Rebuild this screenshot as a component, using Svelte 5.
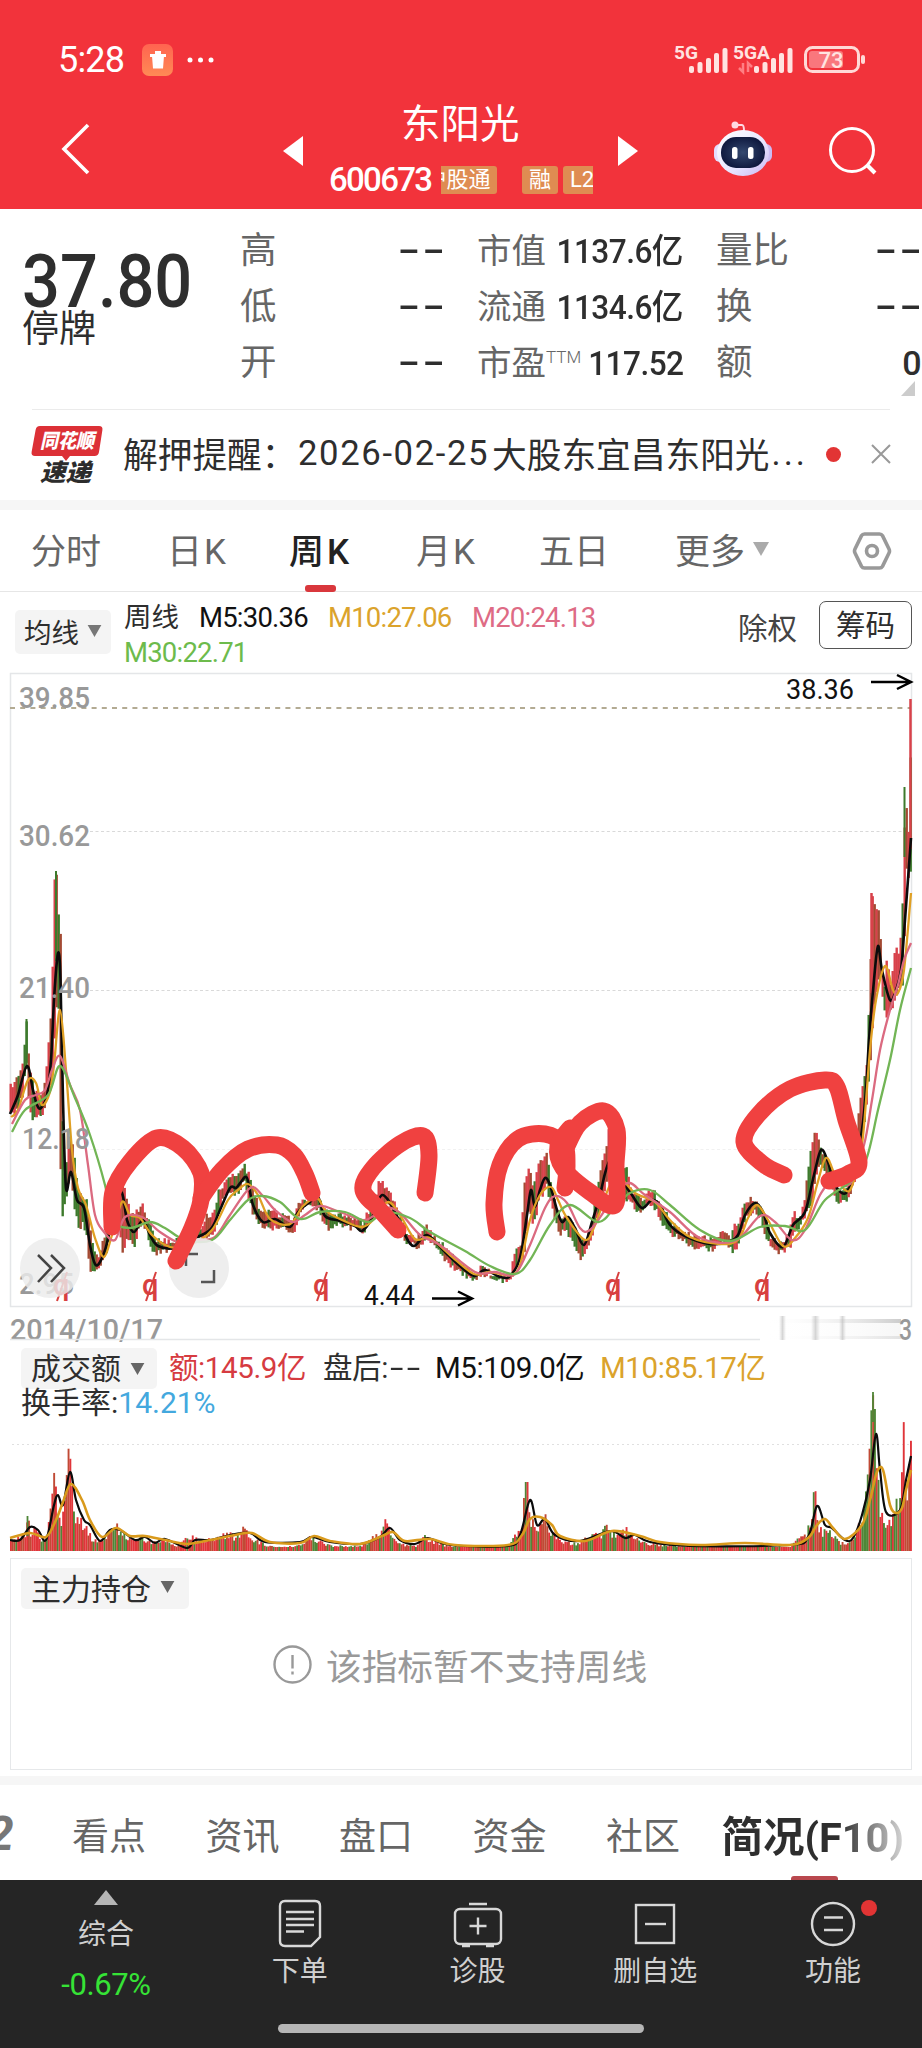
<script>
  const quotes = [
    ['高', '--', '市值', '1137.6亿', '量比', '--'],
    ['低', '--', '流通', '1134.6亿', '换', '--'],
    ['开', '--', '市盈', '117.52', '额', '0']
  ];
  const periods = [
    { label: '分时', left: 31 },
    { label: '日K', left: 167 },
    { label: '周K', left: 289, active: true },
    { label: '月K', left: 416 },
    { label: '五日', left: 539 },
    { label: '更多', left: 675, more: true }
  ];
  const sections = ['看点', '资讯', '盘口', '资金', '社区'];

  // x, high, low
  const range = [
    [10,1086,1115],[13,1083,1115],[18,1075,1105],[22,1060,1095],[24,1037,1070],[26,1019,1060],[28,1065,1112],[33,1088,1122],[37,1095,1115],[40,1096,1120],[44,1080,1108],[48,1040,1095],[51,990,1075],[53.5,878,1040],[56,871,1000],[58,926,1010],[60,936,1220],[62,1180,1215],[65,1170,1200],[68,1140,1185],[70,1137,1165],[72,1145,1200],[76,1180,1220],[78,1190,1230],[82,1200,1225],[86,1195,1240],[88,1220,1270],[92,1245,1272],[97,1255,1270],[102,1240,1262],[106,1225,1250],[112,1195,1220],[118,1180,1230],[122,1180,1256],[126,1200,1240],[130,1215,1240],[133,1215,1247],[138,1208,1228],[141,1201,1225],[145,1215,1230],[150,1225,1250],[155,1240,1255],[160,1240,1252],[172,1240,1250],[180,1238,1250],[190,1232,1245],[200,1227,1238],[205,1215,1240],[212,1213,1235],[218,1190,1215],[222,1185,1200],[228,1175,1195],[232,1177,1195],[238,1172,1192],[243,1165,1182],[248,1175,1200],[252,1190,1215],[257,1205,1225],[264,1212,1228],[270,1207,1230],[276,1213,1227],[285,1217,1228],[292,1220,1235],[297,1205,1220],[303,1197,1210],[310,1198,1205],[317,1195,1210],[321,1205,1222],[328,1215,1230],[335,1215,1225],[340,1212,1225],[347,1218,1228],[355,1217,1230],[362,1222,1235],[368,1210,1225],[374,1200,1214],[378,1178,1202],[383,1184,1205],[386,1187,1205],[392,1200,1215],[400,1220,1235],[405,1230,1242],[414,1238,1247],[420,1235,1248],[425,1222,1240],[432,1235,1245],[440,1243,1255],[450,1255,1268],[458,1262,1272],[464,1267,1276],[473,1275,1282],[480,1268,1275],[490,1272,1278],[500,1275,1281],[509,1276,1282],[512,1261,1275],[517,1245,1265],[520,1242,1260],[523,1185,1255],[526,1170,1225],[528,1165,1210],[532,1190,1225],[536,1170,1215],[539,1157,1190],[541,1160,1200],[545,1150,1185],[550,1185,1205],[555,1205,1225],[560,1220,1235],[565,1215,1230],[570,1220,1240],[575,1230,1248],[580,1240,1263],[585,1238,1252],[590,1225,1240],[594,1200,1225],[598,1180,1215],[602,1153,1200],[605,1150,1185],[608,1127,1170],[612,1130,1180],[616,1160,1195],[625,1167,1200],[630,1190,1202],[636,1195,1215],[642,1198,1210],[648,1190,1205],[651,1187,1205],[657,1200,1215],[663,1210,1228],[672,1225,1237],[680,1230,1238],[690,1235,1247],[697,1238,1250],[705,1238,1250],[713,1240,1252],[720,1234,1242],[724,1230,1242],[730,1237,1250],[733,1220,1253],[738,1225,1245],[742,1205,1225],[748,1200,1215],[755,1198,1212],[760,1207,1220],[764,1215,1240],[770,1238,1247],[778,1243,1253],[785,1238,1250],[790,1225,1248],[792,1210,1230],[798,1218,1230],[803,1205,1220],[808,1160,1210],[811,1147,1205],[814,1128,1180],[817,1137,1170],[821,1155,1165],[826,1160,1175],[832,1170,1190],[836,1190,1208],[840,1190,1200],[846,1185,1200],[850,1175,1195],[854,1150,1180],[858,1110,1150],[862,1080,1135],[866,1060,1100],[868,1000,1080],[869.5,960,1060],[871.5,893,1030],[873,907,1010],[877,906,985],[880,945,975],[882,980,1005],[884,985,1013],[886,952,1020],[889,985,1015],[892,970,1005],[895,942,1000],[898,953,990],[901,925,985],[903,842,980],[904.5,787,860],[907,840,880],[908.5,818,880],[910.5,699,870]
  ];
  const m5 = [[10,1114],[18,1095],[27,1066],[33,1090],[37,1105],[41,1108],[47,1095],[51,1060],[54,1000],[57,960],[59,954],[60.5,980],[63,1100],[66,1188],[71,1172],[77,1200],[84,1208],[90,1245],[95,1264],[100,1262],[107,1243],[115,1200],[122,1193],[127,1220],[134,1232],[143,1220],[150,1235],[158,1246],[175,1248],[190,1240],[210,1230],[220,1210],[230,1188],[236,1188],[241,1182],[247,1178],[253,1205],[263,1222],[275,1219],[290,1227],[298,1212],[310,1202],[318,1197],[325,1216],[340,1221],[355,1226],[362,1231],[372,1218],[382,1195],[395,1212],[405,1235],[414,1246],[427,1235],[445,1252],[460,1266],[474,1276],[485,1270],[500,1277],[510,1276],[520,1258],[527,1215],[531,1190],[535,1207],[540,1190],[545,1178],[550,1185],[557,1210],[562,1222],[568,1217],[575,1228],[584,1245],[592,1222],[600,1195],[606,1170],[612,1160],[622,1180],[632,1195],[642,1208],[652,1200],[660,1205],[670,1225],[685,1236],[710,1244],[728,1242],[738,1235],[745,1215],[755,1203],[763,1212],[770,1233],[783,1247],[793,1225],[805,1212],[814,1175],[821,1150],[828,1162],[835,1185],[846,1193],[855,1168],[862,1130],[866,1090],[869,1040],[874,980],[878,946],[882,970],[890,1000],[896,990],[901,970],[905,920],[911,838]];
  const m10 = [[11,1117],[18,1110],[28,1080],[36,1083],[42,1105],[50,1092],[54,1065],[60,1010],[66,1070],[72,1150],[78,1188],[86,1205],[95,1238],[104,1257],[112,1235],[122,1202],[130,1215],[140,1218],[152,1235],[170,1247],[190,1245],[212,1230],[228,1200],[238,1190],[248,1184],[258,1195],[270,1219],[290,1224],[303,1206],[317,1198],[325,1210],[340,1219],[362,1227],[375,1218],[388,1202],[400,1215],[415,1239],[430,1238],[450,1255],[474,1274],[490,1272],[510,1275],[520,1265],[530,1220],[540,1195],[551,1187],[558,1200],[567,1218],[585,1240],[595,1225],[610,1185],[620,1178],[635,1193],[655,1202],[670,1220],[690,1237],[720,1244],[738,1240],[748,1218],[757,1205],[768,1220],[783,1246],[795,1238],[808,1218],[817,1185],[826,1158],[835,1175],[845,1190],[852,1186],[862,1145],[870,1050],[876,1000],[885,966],[893,990],[898,993],[904,970],[911,893]];
  const m20 = [[12,1124],[25,1100],[36,1095],[45,1090],[52,1070],[60,1056],[70,1085],[80,1110],[88,1165],[95,1215],[104,1232],[115,1240],[125,1217],[142,1217],[160,1232],[180,1243],[200,1240],[215,1237],[230,1215],[250,1188],[262,1195],[275,1210],[292,1222],[305,1215],[320,1206],[340,1212],[365,1220],[385,1208],[400,1213],[420,1235],[440,1245],[475,1272],[495,1272],[515,1274],[530,1245],[545,1208],[555,1196],[567,1203],[580,1228],[590,1230],[605,1210],[618,1190],[630,1183],[645,1195],[670,1212],[700,1238],[735,1241],[760,1216],[775,1222],[792,1240],[805,1230],[820,1195],[832,1182],[850,1184],[864,1145],[872,1100],[880,1050],[890,1010],[898,985],[904,960],[911,943]];
  const m30 = [[12,1132],[25,1110],[48,1095],[60,1066],[75,1098],[90,1135],[105,1185],[112,1220],[130,1228],[150,1222],[165,1228],[185,1240],[212,1240],[230,1220],[248,1200],[262,1196],[280,1202],[300,1219],[320,1212],[345,1212],[368,1222],[385,1212],[410,1218],[430,1232],[465,1251],[490,1266],[515,1274],[530,1260],[550,1225],[570,1205],[598,1222],[615,1207],[630,1193],[650,1190],[670,1205],[700,1230],[730,1241],[760,1227],[785,1226],[805,1230],[825,1200],[850,1182],[866,1160],[878,1110],[890,1060],[900,1010],[911,968]];

  const volume = [[10,1538],[18,1535],[25,1532],[27,1516],[30,1530],[35,1525],[40,1540],[45,1540],[50,1505],[53,1471],[56,1500],[60,1520],[63,1487],[67,1446],[69,1455],[72,1500],[78,1515],[84,1525],[90,1535],[97,1542],[104,1535],[110,1522],[116,1525],[125,1535],[140,1535],[150,1542],[165,1538],[175,1546],[190,1534],[200,1541],[215,1537],[225,1532],[235,1535],[243,1527],[252,1537],[265,1545],[280,1547],[300,1545],[307,1536],[315,1538],[330,1545],[345,1546],[360,1545],[370,1538],[378,1530],[382,1528],[385,1517],[390,1532],[400,1543],[415,1546],[422,1534],[430,1538],[440,1544],[460,1547],[500,1548],[508,1545],[515,1530],[521,1530],[524,1482],[527,1482],[530,1515],[535,1530],[545,1515],[550,1530],[560,1540],[575,1543],[590,1535],[600,1532],[607,1522],[612,1532],[625,1528],[635,1538],[650,1543],[700,1547],[760,1546],[790,1547],[797,1538],[806,1533],[811,1505],[814,1484],[817,1520],[822,1530],[830,1530],[840,1542],[850,1540],[857,1522],[864,1505],[868,1460],[871,1400],[873,1392],[877,1460],[880,1510],[884,1525],[890,1515],[895,1492],[899,1500],[903,1418],[906,1500],[911,1426]];
  const v5 = [[10,1540],[20,1540],[30,1527],[38,1530],[46,1540],[54,1505],[58,1495],[63,1505],[70,1472],[76,1500],[84,1520],[90,1525],[100,1541],[110,1530],[120,1530],[135,1540],[145,1537],[155,1543],[165,1539],[187,1548],[195,1540],[210,1540],[230,1535],[250,1533],[265,1542],[300,1542],[312,1537],[330,1542],[360,1544],[380,1537],[390,1528],[400,1540],[415,1544],[428,1538],[450,1545],[508,1546],[520,1535],[530,1500],[537,1525],[545,1519],[555,1535],[580,1541],[610,1531],[625,1538],[635,1535],[650,1542],[690,1546],[790,1545],[808,1537],[817,1506],[825,1525],[832,1528],[845,1540],[853,1538],[862,1515],[870,1480],[876,1434],[880,1470],[886,1512],[900,1510],[906,1480],[911,1456]];
  const v10 = [[10,1538],[30,1533],[46,1537],[56,1520],[63,1502],[71,1484],[82,1500],[90,1520],[102,1537],[116,1528],[130,1536],[145,1536],[165,1540],[187,1544],[210,1540],[235,1535],[252,1533],[270,1542],[300,1543],[314,1536],[330,1541],[360,1544],[382,1536],[393,1532],[405,1541],[430,1539],[455,1545],[508,1545],[522,1535],[530,1519],[540,1517],[552,1525],[560,1536],[585,1541],[612,1531],[640,1536],[660,1542],[700,1545],[745,1543],[790,1545],[808,1538],[817,1525],[825,1519],[833,1528],[845,1539],[862,1525],[870,1500],[877,1472],[883,1470],[890,1505],[896,1513],[902,1508],[906,1490],[911,1470]];

  const scribbles = [
    [[112,1227],[113,1192],[130,1162],[157,1138],[183,1148],[201,1173],[201,1200],[192,1228],[176,1261]],
    [[201,1198],[222,1170],[248,1149],[277,1145],[294,1155],[305,1174],[312,1193]],
    [[425,1193],[429,1155],[423,1136],[400,1144],[373,1168],[363,1190],[380,1210],[398,1230]],
    [[497,1232],[494,1203],[500,1165],[518,1139],[545,1134],[564,1145],[567,1165],[565,1188]],
    [[565,1150],[580,1123],[604,1111],[617,1130],[616,1165],[615,1205],[590,1192],[563,1168],[558,1146],[570,1128]],
    [[784,1175],[763,1164],[744,1142],[758,1115],[790,1089],[825,1080],[837,1087],[846,1120],[859,1162],[848,1174],[829,1181]]
  ];

  const rand = (i) => {
    const v = Math.sin(i * 127.1 + 11.7) * 43758.5453;
    return v - Math.floor(v);
  };

  function at(points, x, k = 1) {
    let i = 1;
    while (i < points.length - 1 && points[i][0] < x) i++;
    const a = points[i - 1];
    const b = points[i];
    const t = Math.min(1, Math.max(0, (x - a[0]) / (b[0] - a[0])));
    return a[k] + (b[k] - a[k]) * t;
  }

  // Catmull-Rom through the points
  function smooth(p, tension = 6) {
    let d = `M${p[0][0]} ${p[0][1]}`;
    for (let i = 0; i < p.length - 1; i++) {
      const a = p[i - 1] ?? p[i];
      const b = p[i];
      const c = p[i + 1];
      const e = p[i + 2] ?? c;
      const c1 = [b[0] + (c[0] - a[0]) / tension, b[1] + (c[1] - a[1]) / tension];
      const c2 = [c[0] - (e[0] - b[0]) / tension, c[1] - (e[1] - b[1]) / tension];
      d += `C${c1[0].toFixed(1)} ${c1[1].toFixed(1)} ${c2[0].toFixed(1)} ${c2[1].toFixed(1)} ${c[0]} ${c[1]}`;
    }
    return d;
  }

  const red = '#d8414a';
  const green = '#3d7a2c';
  const mixed = '#a34a33';

  const candles = [];
  for (let x = 9.5, i = 0; x < 911; x += 2, i++) {
    const falling = at(m5, x + 3) > at(m5, x - 3);
    const r = rand(i);
    const color = r < 0.32 ? mixed : (r < 0.78) === falling ? green : red;
    const jitter = rand(i + 900) * 7;
    candles.push({ x, top: at(range, x, 1) + jitter - 3, bottom: at(range, x, 2) - rand(i + 400) * 6 + 2, color });
  }

  const bars = [];
  for (let x = 10, i = 0; x < 911; x += 1.8, i++) {
    const peak = at(volume, x);
    const h = (1551 - peak) * (0.62 + rand(i + 70) * 0.45);
    const sharp = [27, 53, 67, 385, 524, 526, 814, 873, 903, 910].some((s) => Math.abs(s - x) < 1.2);
    const r = rand(i + 31);
    bars.push({ x, h: Math.max(4, sharp ? 1551 - peak : h), color: r < 0.45 ? '#e0353a' : r < 0.72 ? '#c04a35' : '#4f8637' });
  }
</script>

{#snippet caret(w, h, fill)}
  <svg class="caret" width={w} height={h} viewBox="0 0 16 14"><path d="M0 0h16L8 14z" {fill} /></svg>
{/snippet}

<div class="app">
  <header>
    <div class="status">
      <span class="time">5:28</span>
      <span class="trash">
        <svg width="20" height="20" viewBox="0 0 20 20"><path d="M2 4h16v3H2zM7 1h6v3H7zM4 6h12l-1 12.500H5z" fill="#fff" /></svg>
      </span>
      <svg class="dots" width="28" height="8" viewBox="0 0 28 8" fill="#fff"><circle cx="3" cy="4" r="2.500" /><circle cx="13.500" cy="4" r="2.500" /><circle cx="24" cy="4" r="2.500" /></svg>
      <svg class="signals" width="195" height="44" viewBox="672 37 195 44">
        <g class="net"><text x="674" y="58" textLength="24" lengthAdjust="spacingAndGlyphs">5G</text><text x="733" y="58" textLength="37" lengthAdjust="spacingAndGlyphs">5GA</text></g>
        <g fill="#ffe3e0">
          {#each [689, 754] as x0}
            <rect x={x0} y="65" width="5" height="7" rx="2" />
            <rect x={x0 + 8.500} y="61" width="5" height="11" rx="2" />
            <rect x={x0 + 17} y="57" width="5" height="15" rx="2" />
            <rect x={x0 + 25} y="52" width="5" height="20" rx="2" />
            <rect x={x0 + 33.500} y="47" width="5" height="25" rx="2" />
          {/each}
        </g>
        <path d="M743 62v9l-4-4M748 71v-9l4 4" fill="none" stroke="#ff7f84" stroke-width="2.500" />
        <rect x="809" y="50" width="34" height="17" rx="3" fill="#f9777d" />
        <rect x="805.500" y="46.500" width="53" height="24" rx="7" fill="none" stroke="#ffd9d6" stroke-width="3" />
        <rect x="861" y="54" width="4" height="9" rx="2" fill="#ffd9d6" />
        <text class="pct" x="831" y="67" text-anchor="middle">73</text>
      </svg>
    </div>

    <div class="nav">
      <svg class="back" width="30" height="52" viewBox="0 0 30 52"><path d="M27 2 3 26l24 24" fill="none" stroke="#fff" stroke-width="3.600" /></svg>
      <svg class="prev" width="20" height="30" viewBox="0 0 20 30"><path d="M20 0v30L0 15z" fill="#fff" /></svg>
      <div class="stock">
        <h1>东阳光</h1>
        <div class="code">
          <span>600673</span>
          <div class="tags"><i class="first">沪股通</i><i class="rong">融</i><i class="lv">L2</i></div>
        </div>
      </div>
      <svg class="next" width="20" height="30" viewBox="0 0 20 30"><path d="M0 0v30l20-15z" fill="#fff" /></svg>
      <svg class="robot" width="60" height="58" viewBox="0 0 60 58">
        <defs>
          <linearGradient id="shell" x1="0" y1="0" x2="1" y2="1"><stop offset="0" stop-color="#fff" /><stop offset=".6" stop-color="#e6e4ff" /><stop offset="1" stop-color="#c9b4f0" /></linearGradient>
          <radialGradient id="visor"><stop offset="0" stop-color="#34486f" /><stop offset="1" stop-color="#101a40" /></radialGradient>
        </defs>
        <circle cx="22" cy="5" r="3.500" fill="#ffd9e2" />
        <path d="M24 5h5q2 0 2 6" fill="none" stroke="#ffd9e2" stroke-width="2" />
        <rect x="1" y="24" width="12" height="18" rx="6" fill="#e4ddff" />
        <rect x="47" y="24" width="12" height="18" rx="6" fill="#cbbcf3" />
        <ellipse cx="30" cy="33" rx="26" ry="23" fill="url(#shell)" />
        <rect x="8" y="17" width="44" height="31" rx="15" fill="url(#visor)" />
        <rect x="19" y="27" width="5.500" height="12" rx="2.500" fill="#fff" />
        <rect x="35" y="27" width="5.500" height="12" rx="2.500" fill="#fff" />
      </svg>
      <svg class="search" width="50" height="50" viewBox="0 0 50 50" fill="none" stroke="#fff" stroke-width="3"><circle cx="24" cy="24" r="21.500" /><path d="m39 39 8 8" stroke-width="4" /></svg>
    </div>
  </header>

  <section class="summary">
    <div class="last"><strong>37.80</strong><span>停牌</span></div>
    <div class="quotes">
      {#each quotes as [a, av, b, bv, c, cv], i}
        <div class="cell one"><span>{a}</span><b class="dash">{av}</b></div>
        <div class="cell two"><span>{b}{#if i === 2}<sup>TTM</sup>{/if}</span><b>{bv}</b></div>
        <div class="cell three"><span>{c}</span><b class:dash={cv === '--'}>{cv}</b></div>
      {/each}
      <svg class="corner" width="14" height="15" viewBox="0 0 14 15"><path d="M14 0v15H0z" fill="#ccc" /></svg>
    </div>
  </section>

  <section class="news">
    <svg class="badge" width="74" height="62" viewBox="30 423 74 62">
      <path d="M40 425h59q4 0 3.400 4l-3.400 22q-.600 4-4.600 4H70l-4 5-4-5H35q-4 0-3.400-4l4-22q.600-4 4.400-4z" fill="#dc3036" />
      <text x="40" y="447" textLength="54" lengthAdjust="spacingAndGlyphs" fill="#fff">同花顺</text>
      <text class="dark" x="40" y="480" textLength="51" lengthAdjust="spacingAndGlyphs" fill="#2c2c2c">速递</text>
    </svg>
    <p><span>解押提醒：</span><span class="date">2026-02-25</span>大股东宜昌东阳光<em>...</em></p>
    <i class="unread"></i>
    <svg class="close" width="20" height="20" viewBox="0 0 20 20"><path d="m1 1 18 18M19 1 1 19" stroke="#999" stroke-width="2" /></svg>
  </section>

  <nav class="periods">
    {#each periods as p, i}
      <span class:active={p.active} class:latin={p.label.endsWith('K')} style:width="{(periods[i + 1]?.left ?? 852) - p.left}px">{p.label}{#if p.more}{@render caret(18, 14, '#aaa')}{/if}</span>
    {/each}
    <svg width="40" height="38" viewBox="0 0 40 38" fill="none" stroke="#999" stroke-width="3.600"><path d="M12.500 2h15q2 0 3 1.700L37 17q1 2 0 4l-6.500 13.300q-1 1.700-3 1.700h-15q-2 0-3-1.700L3 21q-1-2 0-4L9.500 3.700q1-1.700 3-1.700z" /><circle cx="20" cy="19" r="5.500" /></svg>
  </nav>

  <section class="indicator">
    <button>均线{@render caret(15, 12, '#777')}</button>
    <div class="averages">
      <span>周线</span><span class="k">M5:30.36</span><span class="y">M10:27.06</span><span class="p">M20:24.13</span><span class="g">M30:22.71</span>
    </div>
    <span class="adjust">除权</span>
    <span class="chips">筹码</span>
  </section>

  <svg class="chart" width="922" height="672" viewBox="0 672 922 672">
    <rect x="10.500" y="673.500" width="901" height="633" fill="none" stroke="#e4e6e8" stroke-width="1.500" />
    <path d="M10 708H911" stroke="#b3ab93" stroke-width="1.800" stroke-dasharray="5 5.200" />
    <path d="M90 831.500H911M90 990.500H870" stroke="#d9d9d9" stroke-dasharray="3 2.500" />
    <path d="M90 1149.500H870" stroke="#f1f1f1" stroke-dasharray="3 2.500" />

    {#each candles as c}
      <rect x={c.x} y={c.top} width="2.400" height={Math.max(3, c.bottom - c.top)} fill={c.color} />
    {/each}
    <path d="M26.500 1019v50M56 871v90M904.500 787v70" stroke="#3d7a2c" stroke-width="2" />
    <path d="M910.500 699v150M871.500 893v100" stroke="#d8414a" stroke-width="2.500" />

    <g fill="none" stroke-width="2.300" stroke-linejoin="round">
      <path d={smooth(m5)} stroke="#0b0b0b" stroke-width="2.600" />
      <path d={smooth(m10)} stroke="#e0a024" />
      <path d={smooth(m20)} stroke="#db6a80" />
      <path d={smooth(m30)} stroke="#72b555" />
    </g>

    <g class="axis">
      <text x="19" y="708" textLength="71" lengthAdjust="spacingAndGlyphs">39.85</text>
      <text x="19" y="846" textLength="71" lengthAdjust="spacingAndGlyphs">30.62</text>
      <text x="19" y="998" textLength="71" lengthAdjust="spacingAndGlyphs">21.40</text>
      <text x="22" y="1149" textLength="68" lengthAdjust="spacingAndGlyphs">12.18</text>
      <text x="19" y="1294" textLength="55" lengthAdjust="spacingAndGlyphs">2.95</text>
      <text x="10" y="1340" textLength="153" lengthAdjust="spacingAndGlyphs">2014/10/17</text>
      <text x="899" y="1340" textLength="13" lengthAdjust="spacingAndGlyphs">3</text>
    </g>

    <g class="mark">
      {#each [61, 150, 321, 613, 762] as x}
        <text x={x - 8} y="1295">q</text>
        <path d="M{x - 4} 1301 {x + 6} 1272" />
      {/each}
    </g>

    <g fill="#ececec">
      <circle cx="50" cy="1268" r="30" opacity=".82" />
      <circle cx="199" cy="1268" r="30" opacity=".9" />
    </g>
    <path d="m38 1255 13 13-13 14M51 1255l13 13-13 14" fill="none" stroke="#444" stroke-width="2.500" />
    <path d="M186 1266v-12h12M214 1270v12h-13" fill="none" stroke="#555" stroke-width="2.500" />

    <g fill="none" stroke="#f04140" stroke-width="17" stroke-linecap="round" stroke-linejoin="round">
      {#each scribbles as s}
        <path d={smooth(s)} />
      {/each}
    </g>

    <g class="extreme">
      <text x="786" y="699" textLength="68" lengthAdjust="spacingAndGlyphs">38.36</text>
      <text x="364" y="1305" textLength="51" lengthAdjust="spacingAndGlyphs">4.44</text>
      <path d="M871 682h40M897 675l14 7-14 7M432 1298.500h40M458 1291.500l14 7-14 7" />
    </g>

    <path d="M10 1339.500H760" stroke="#e4e6e8" stroke-width="1.500" />
    <linearGradient id="ghost"><stop offset="0" stop-color="#fff" stop-opacity="0" /><stop offset="1" stop-color="#aaa" /></linearGradient>
    <linearGradient id="soft"><stop offset="0" stop-color="#bbb" stop-opacity="0" /><stop offset=".5" stop-color="#bbb" /><stop offset="1" stop-color="#bbb" stop-opacity="0" /></linearGradient>
    <rect x="765" y="1319" width="136" height="4" fill="url(#ghost)" opacity=".6" />
    <rect x="765" y="1323" width="136" height="13" fill="url(#ghost)" opacity=".1" />
    <rect x="765" y="1336" width="136" height="3" fill="url(#ghost)" opacity=".35" />
    <g fill="url(#soft)" opacity=".6"><rect x="779" y="1316" width="7" height="24" /><rect x="811" y="1316" width="9" height="24" /><rect x="839" y="1316" width="7" height="24" /></g>
  </svg>

  <section class="turnover">
    <div class="legend">
      <button>成交额{@render caret(15, 12, '#666')}</button>
      <span class="r">额:145.9亿</span><span class="after">盘后:<tt>--</tt></span><span class="k v5">M5:109.0亿</span><span class="y v10">M10:85.17亿</span>
    </div>
    <div class="rate">换手率:<span>14.21%</span></div>
    <svg width="922" height="138" viewBox="0 1416 922 138">
      <path d="M12 1444.500H911" stroke="#e0e0e0" stroke-dasharray="2 3" />
      {#each bars as b}
        <rect x={b.x} y={1551 - b.h} width="1.900" height={b.h} fill={b.color} />
      {/each}
      <path d="M873 1392v30M27.500 1516v20" stroke="#4f8637" stroke-width="1.800" />
      <g fill="none" stroke-width="2.200">
        <path d={smooth(v5)} stroke="#0b0b0b" />
        <path d={smooth(v10)} stroke="#d99a1c" stroke-width="2.600" />
      </g>
    </svg>
  </section>

  <section class="holding">
    <button>主力持仓{@render caret(15, 12, '#666')}</button>
    <p>
      <svg width="39" height="39" viewBox="0 0 39 39" fill="none" stroke="#999" stroke-width="2.400"><circle cx="19.500" cy="19.500" r="18" /><path d="M19.500 10v13.500M19.500 26.500v3" /></svg>
      该指标暂不支持周线
    </p>
  </section>

  <nav class="sections">
    <span class="cut">2</span>
    {#each sections as s}<span>{s}</span>{/each}
    <span class="current">简况(F10)</span>
  </nav>

  <footer>
    <div class="item index">
      <svg width="24" height="15" viewBox="0 0 24 15"><path d="M12 0l12 15H0z" fill="#b5b5b5" /></svg>
      <span>综合</span>
      <em>-0.67%</em>
    </div>
    <div class="item">
      <svg width="44" height="49" viewBox="0 0 44 49" fill="none" stroke="#d8d8d8" stroke-width="2.400"><path d="M7 2h30q5 0 5 5v31l-9 9H7q-5 0-5-5V7q0-5 5-5z" /><path d="M8 13h28M8 20h28M8 26h28M8 32.500h18" /></svg>
      <span>下单</span>
    </div>
    <div class="item">
      <svg width="50" height="49" viewBox="0 0 50 49" fill="none" stroke="#d8d8d8" stroke-width="2.400"><rect x="2" y="10" width="46" height="35" rx="5" /><path d="M16 5h18M25 18.500v17M16.500 27h17M9 47h8M33 47h8" /></svg>
      <span>诊股</span>
    </div>
    <div class="item">
      <svg width="50" height="49" viewBox="0 0 50 49" fill="none" stroke="#d8d8d8" stroke-width="2.400"><rect x="6" y="6" width="38" height="38" /><path d="M15 25h21" /></svg>
      <span>删自选</span>
    </div>
    <div class="item">
      <svg width="50" height="49" viewBox="0 0 50 49" fill="none" stroke="#d8d8d8" stroke-width="2.400"><circle cx="25" cy="25" r="21" /><path d="M16 18.500h19M16 31h19" /></svg>
      <span>功能</span>
      <i class="alert"></i>
    </div>
    <i class="home"></i>
  </footer>
</div>

<style>
  :global(body) { margin: 0; background: #fff; }
  .app { width: 922px; height: 2048px; overflow: hidden; background: #fff; color: #2e2e2e; font-family: Roboto, 'Noto Sans CJK SC', sans-serif; white-space: nowrap; }
  .app * { box-sizing: border-box; }
  svg { display: block; flex: none; }
  h1, p { margin: 0; font-weight: 400; }
  i, em { font-style: normal; }
  button { display: flex; align-items: center; border: 0; border-radius: 5px; background: #f4f4f4; color: #2e2e2e; font: inherit; padding: 0; }

  header { height: 209px; background: #f2333b; color: #fff; }
  .status { height: 88px; padding: 32px 55px 0 58px; display: flex; align-items: center; }
  .time { width: 84px; font-size: 36px; letter-spacing: -0.8px; line-height: 56px; }
  .trash { width: 31px; height: 32px; border-radius: 7px; background: linear-gradient(#ff6450, #ff8a55); display: grid; place-items: center; }
  .dots { margin-left: 14px; }
  .signals { margin-left: auto; overflow: visible; }
  .net { font-size: 19px; font-weight: 700; fill: #ffe3e0; }
  .pct { font-size: 22px; fill: #ffe3e0; font-weight: 500; }

  .nav { height: 121px; display: flex; align-items: flex-start; padding-left: 61px; }
  .back { margin-top: 35px; }
  .prev { margin: 48px 0 0 192px; }
  .stock { width: 315px; padding-left: 24px; }
  h1 { font-size: 39.500px; line-height: 56px; margin: 9px 0 0 74px; }
  .code { display: flex; align-items: center; height: 38px; margin-top: 8px; }
  .code > span { width: 114px; font-size: 33px; font-weight: 500; letter-spacing: -1.700px; padding-left: 2px; line-height: 38px; }
  .tags { width: 152px; height: 28px; overflow: hidden; display: flex; }
  .tags i { flex: none; height: 28px; border-radius: 3px; background: #df8c52; font-size: 22px; line-height: 27px; text-align: center; }
  .tags .first { width: 80px; margin-left: -24px; padding-left: 1px; margin-right: 25px; }
  .tags .rong { width: 36px; margin-right: 5px; }
  .tags .lv { width: 38px; }
  .next { margin-top: 48px; }
  .robot { margin: 32px 0 0 75px; }
  .search { margin: 38px 0 0 55px; }

  .summary { height: 200px; display: flex; padding-top: 14px; }
  .last { width: 240px; padding: 26px 0 0 22px; }
  .last strong { display: block; font-size: 75px; font-weight: 500; line-height: 64px; transform: scaleX(.89); transform-origin: 0 0; }
  .last span { display: block; font-size: 37px; line-height: 40px; margin-top: -3px; }
  .quotes { position: relative; height: 184px; display: grid; grid-template-columns: 204px 206px 205px; column-gap: 33px; grid-auto-rows: 56px; }
  .cell { display: flex; justify-content: space-between; align-items: center; font-size: 36.500px; color: #666; line-height: 56px; }
  .cell b { font-weight: 500; font-size: 34px; letter-spacing: -0.6px; color: #2e2e2e; }
  .two { font-size: 34.500px; }
  .two b { transform: scaleX(.93); transform-origin: 100% 50%; }
  .cell .dash { transform: scaleX(1.8); transform-origin: 100% 50%; letter-spacing: 1.500px; margin-right: -3px; font-size: 36px; }
  sup { font-size: 17px; line-height: 0; vertical-align: 12px; font-weight: 300; }
  .corner { position: absolute; right: 6px; bottom: 11px; }

  .news { height: 91px; margin: 0 32px; border-top: 1px solid #ebebeb; display: flex; align-items: center; }
  .badge { margin-left: -2px; }
  .badge text { font-size: 20px; font-weight: 900; font-style: italic; font-family: 'Noto Sans CJK SC', sans-serif; }
  .badge .dark { font-size: 24px; }
  .news p { width: 704px; margin: -4px 0 0 19px; font-size: 34.700px; display: flex; align-items: center; height: 54px; }
  .news p > span:first-child { width: 175px; }
  .date { width: 194px; letter-spacing: 1.600px; }
  .news em { letter-spacing: 3px; margin-left: 2px; }
  .unread { width: 15px; height: 15px; border-radius: 50%; background: #e23434; margin-left: -1px; margin-top: -1px; }
  .close { margin: -2px 0 0 auto; transform: translateX(1px); }

  .periods { height: 92px; border-top: 10px solid #f6f6f6; border-bottom: 1px solid #e6e6e6; padding: 0 30px 0 31px; display: flex; align-items: center; font-size: 35px; color: #666; }
  .periods span { position: relative; flex: none; display: flex; align-items: center; height: 100%; padding-bottom: 4px; }
  .periods .latin { letter-spacing: 2px; }
  .periods .active { color: #222; font-weight: 500; letter-spacing: 3px; }
  .periods .active::after { content: ''; position: absolute; left: 16px; bottom: -1px; width: 31px; height: 7px; border-radius: 3px; background: #d9373c; }
  .periods .caret { margin-left: 7px; }

  .indicator { height: 80px; display: flex; padding-left: 15px; }
  .indicator button { width: 96px; height: 44px; margin-top: 18px; padding: 0 0 2px 9px; font-size: 27.500px; }
  .indicator .caret { margin-left: 8px; }
  .averages { width: 598px; margin-left: 13px; padding-top: 8px; display: flex; flex-wrap: wrap; align-content: flex-start; font-size: 27.500px; line-height: 35px; letter-spacing: -0.8px; }
  .averages span:nth-child(1) { width: 75px; letter-spacing: 0; }
  .averages .k { width: 129px; }
  .averages .y { width: 144px; }
  .averages .p { width: 200px; }
  .k { color: #111; }
  .y { color: #dba32c; }
  .p { color: #de6b85; }
  .g { color: #6dbb4c; }
  .r { color: #d63b41; }
  .adjust { width: 81px; margin-left: 16px; font-size: 29.500px; line-height: 75px; color: #444; }
  .chips { width: 93px; height: 48px; margin-top: 9px; border: 1.500px solid #555; border-radius: 7px; text-align: center; font-size: 29.500px; line-height: 48px; }

  .axis { font-size: 29px; fill: #999; font-weight: 500; }
  .extreme { font-size: 27px; fill: #111; }
  .extreme path { fill: none; stroke: #000; stroke-width: 2.500; }
  .mark { font-size: 29px; fill: #d8403f; font-weight: 500; }
  .mark path { stroke: #d8403f; stroke-width: 2; }

  .turnover { height: 214px; }
  .turnover > svg { overflow: visible; }
  .legend { height: 44px; padding-left: 21px; display: flex; align-items: flex-start; font-size: 29.500px; line-height: 49px; letter-spacing: -0.4px; }
  .legend button { width: 136px; height: 41px; margin: 4px 12px 0 0; padding-left: 10px; font-size: 30px; line-height: 40px; }
  .legend .caret, .holding .caret { margin-left: 9px; }
  .legend .r { width: 154px; }
  .after { width: 112px; }
  tt { display: inline-block; font-family: inherit; transform: scaleX(1.650); transform-origin: 0 50%; letter-spacing: 2px; margin-left: 2px; }
  .v5 { width: 165px; }
  .rate { padding-left: 21px; height: 28px; font-size: 30px; line-height: 29px; }
  .rate span { color: #43a8de; letter-spacing: 0; }

  .holding { height: 212px; margin: 0 10px; border: 1.500px solid #e6e8ea; padding: 9px 0 0 10px; }
  .holding button { width: 168px; height: 41px; padding: 0 0 3px 10px; font-size: 30px; }
  .holding p { display: flex; align-items: center; gap: 14px; height: 54px; margin: 28px 0 0 252px; color: #999; font-size: 35.700px; }

  .sections { height: 104px; margin-top: 6px; border-top: 9px solid #f6f6f6; position: relative; display: flex; align-items: center; font-size: 37px; color: #666; overflow: hidden; padding-top: 2px; }
  .sections span { flex: none; width: 133.500px; }
  .sections .cut { width: 72px; font-size: 48px; font-weight: 700; font-style: italic; text-indent: -13px; color: #777; }
  .sections .current { width: 196px; margin-left: -18px; font-size: 41.500px; font-weight: 700; background: linear-gradient(90deg, #2e2e2e 60%, #ddd 94%); -webkit-background-clip: text; background-clip: text; color: transparent; }
  .sections::after { content: ''; position: absolute; left: 791px; bottom: 0; width: 47px; height: 4px; border-radius: 3px 3px 0 0; background: #b9484e; }

  footer { position: relative; height: 168px; background: #252525; color: #d0d0d0; display: flex; font-size: 28px; padding-left: 17px; }
  .item { position: relative; flex: none; width: 177.700px; display: flex; flex-direction: column; align-items: center; padding-top: 19px; }
  .item:first-child { width: 194px; padding: 10px 16px 0 0; }
  .item span { line-height: 40px; margin-top: 4px; }
  .item.index span { margin-top: 10px; }
  .index em { color: #36e336; font-size: 31px; line-height: 40px; margin-top: 10px; letter-spacing: -0.4px; }
  .alert { position: absolute; left: 117px; top: 20px; width: 16px; height: 16px; border-radius: 50%; background: #e23434; }
  .home { position: absolute; left: 278px; bottom: 15px; width: 366px; height: 9px; border-radius: 5px; background: #b6b6b6; }
</style>
